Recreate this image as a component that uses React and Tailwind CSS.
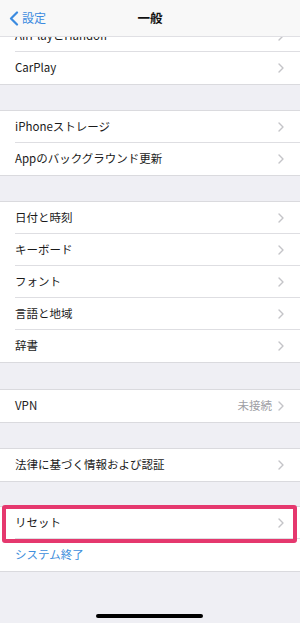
import React from "react";

const font = { fontFamily: '"Noto Sans CJK JP", "Noto Sans", sans-serif' };

const Chevron = () => (
  <svg width="6" height="10" viewBox="0 0 6 10" className="shrink-0">
    <path d="M1 1l4 4-4 4" fill="none" stroke="#c4c4c8" strokeWidth="1.4" strokeLinecap="round" strokeLinejoin="round" />
  </svg>
);

const Row = ({ label, value, last, children }) => (
  <div className="relative flex h-[32px] items-center pl-[15px]">
    <div
      className={
        "flex h-full flex-1 items-center pr-[16px] " +
        (last ? "" : "border-b border-[#dedee2]")
      }
    >
      <span className="flex-1 text-[11.5px] text-[#1a1a1a]">{label}</span>
      {value && <span className="mr-[6px] text-[11.5px] text-[#a0a0a5]">{value}</span>}
      <Chevron />
    </div>
    {children}
  </div>
);

const Group = ({ children, className = "" }) => (
  <div className={"border-y border-[#dadade] bg-white " + className}>{children}</div>
);

export default function App() {
  return (
    <div className="relative h-[623px] w-[300px] overflow-hidden bg-[#efeff4]" style={font}>
      <div className="absolute inset-x-0 top-0 z-10 flex h-[37px] items-center border-b border-[#e0e0e4] bg-[#f8f8f8]">
        <div className="flex items-center pl-[9px]">
          <svg width="10" height="15" viewBox="0 0 10 15">
            <path d="M8 1.5L2 7.5l6 6" fill="none" stroke="#3b8be0" strokeWidth="2.2" strokeLinecap="round" strokeLinejoin="round" />
          </svg>
          <span className="ml-[3px] text-[12px] text-[#3b8be0]">設定</span>
        </div>
        <span className="absolute left-1/2 -translate-x-1/2 text-[12.5px] font-bold text-[#111]">一般</span>
      </div>

      <Group className="mt-[20px] border-t-0">
        <Row label="AirPlayとHandoff" />
        <Row label="CarPlay" last />
      </Group>

      <Group className="mt-[25px]">
        <Row label="iPhoneストレージ" />
        <Row label="Appのバックグラウンド更新" last />
      </Group>

      <Group className="mt-[25px]">
        <Row label="日付と時刻" />
        <Row label="キーボード" />
        <Row label="フォント" />
        <Row label="言語と地域" />
        <Row label="辞書" last />
      </Group>

      <Group className="mt-[26px]">
        <Row label="VPN" value="未接続" last />
      </Group>

      <Group className="mt-[25px]">
        <Row label="法律に基づく情報および認証" last />
      </Group>

      <Group className="mt-[24px]">
        <Row label="リセット">
          <div className="pointer-events-none absolute -top-[2px] -bottom-[4px] left-[2px] right-[3px] rounded-[3px] border-[4px] border-[#e5386e]" />
        </Row>
        <div className="flex h-[32px] items-center pl-[15px]">
          <span className="text-[11.5px] text-[#3f8fdc]">システム終了</span>
        </div>
      </Group>

      <div className="absolute bottom-[5px] left-[96px] h-[4px] w-[107px] rounded-full bg-black" />
    </div>
  );
}
